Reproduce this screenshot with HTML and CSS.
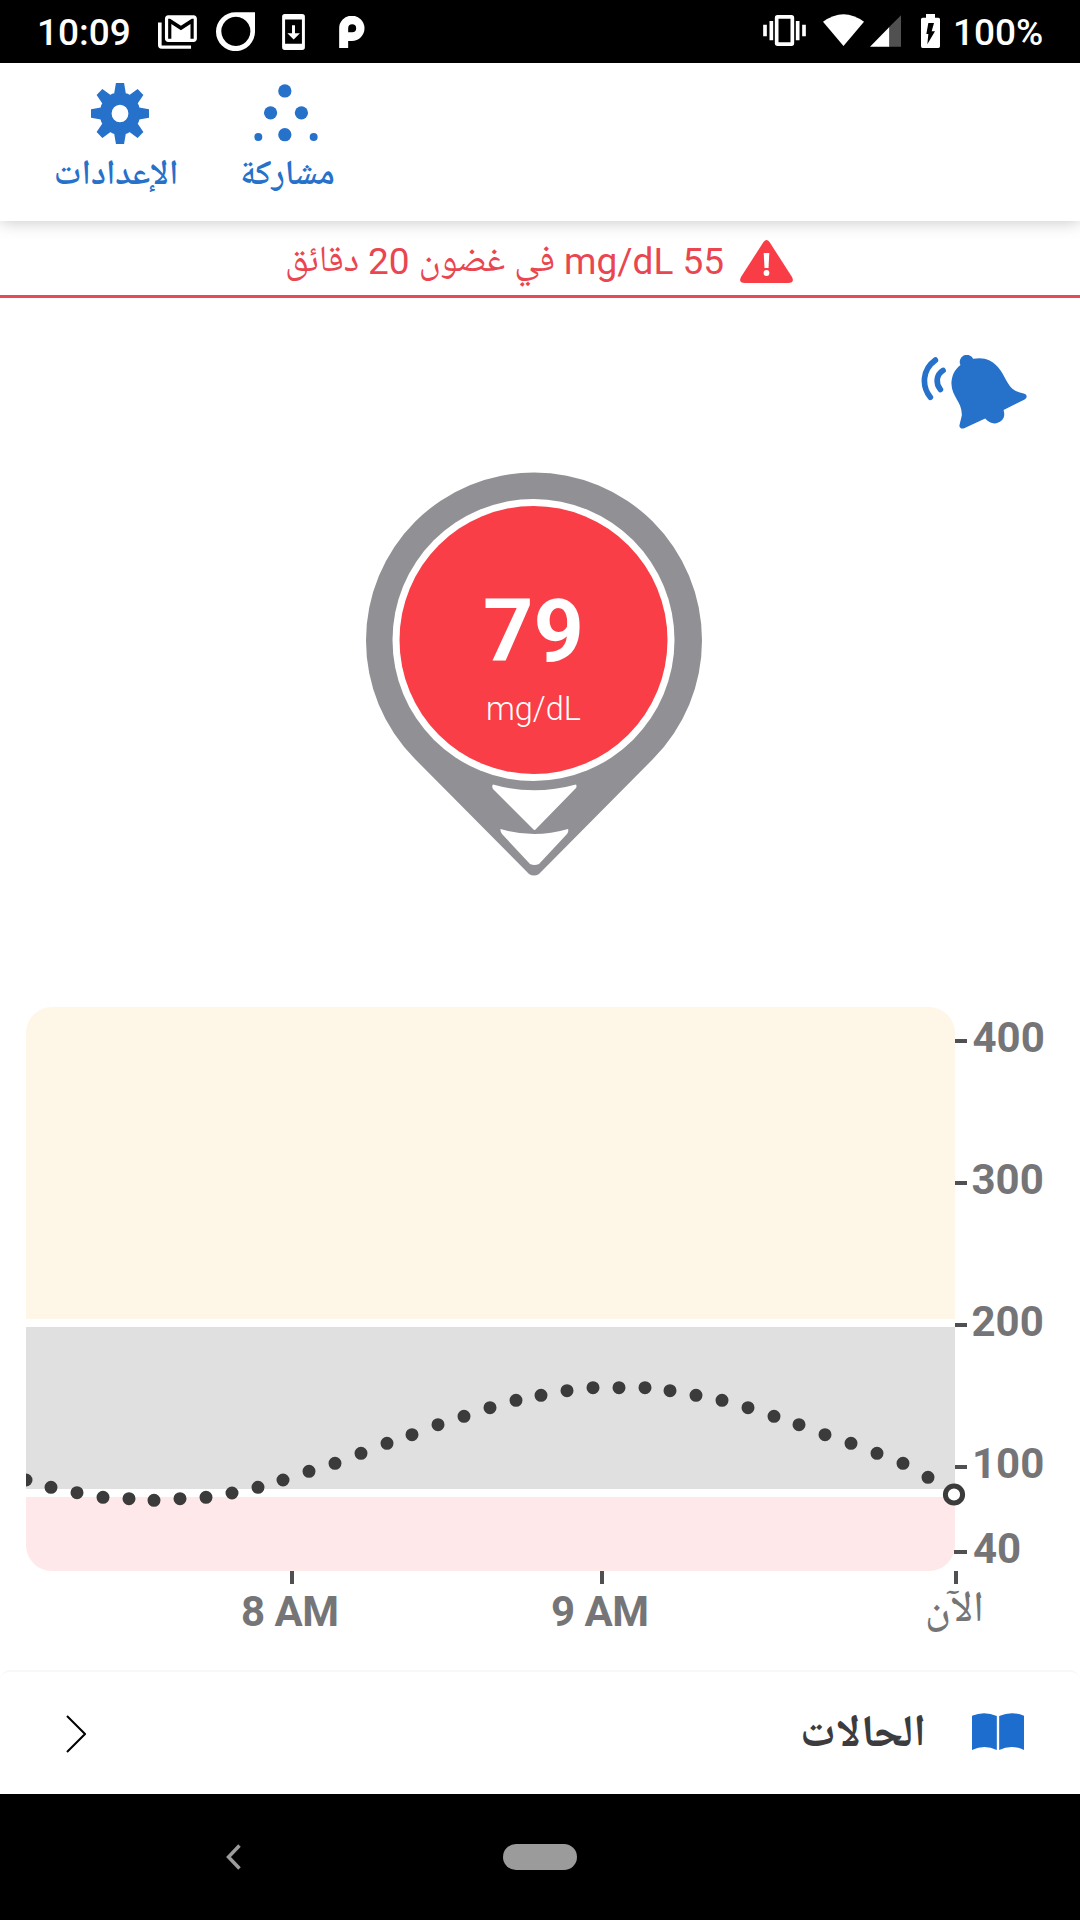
FILE: index.html
```html
<!DOCTYPE html>
<html lang="ar">
<head>
<meta charset="utf-8">
<title>79 mg/dL</title>
<link rel="stylesheet" href="styles.css">
</head>
<body>
<div class="screen">
  <div class="status">
    <span class="status-text clock">10:09</span>
    <svg class="i-mail" viewBox="474 44 118 101"><path fill="#fff" d="M474 66h11v69h89v10h-89q-11 0-11-11z"/><path fill="#fff" transform="translate(485.400 23.800) scale(4.830 5.060)" d="M20 4H4c-1.100 0-2 .9-2 2v12c0 1.100.9 2 2 2h16c1.100 0 2-.9 2-2V6c0-1.100-.9-2-2-2zm0 14h-2V9.250L12 13 6 9.250V18H4V6h1.200l6.800 4.250L18.800 6H20v12z"/></svg>
    <svg class="i-ring" viewBox="647 36 118 117"><path fill="#fff" fill-rule="evenodd" d="M706 36h59v58a59 59 0 1 1-59-58zM707 50a44 44 0 1 0 .1 0z"/></svg>
    <svg class="i-phone" viewBox="847 41 69 109"><path fill="#fff" fill-rule="evenodd" d="M855 41h53q8 0 8 8v93q0 8-8 8h-53q-8 0-8-8V49q0-8 8-8zM856 58v73h51V58z"/><path fill="#fff" d="M877 75h9v24h15l-19 19l-19-19h14z"/></svg>
    <svg class="i-p" viewBox="1017 48 77 96"><path fill="#fff" fill-rule="evenodd" d="M1017 144V86a38 38 0 1 1 38 37h-11v21zM1044 97h12a12 12 0 1 0-12-12z"/></svg>
    <span class="spacer"></span>
    <svg class="i-vibe" viewBox="128 46 128 93"><path fill="#fff" fill-rule="evenodd" d="M171 46h42q8 0 8 8v77q0 8-8 8h-42q-8 0-8-8V54q0-8 8-8zM174 57v71h36V57zM128 75h11v35h-11zM147 64h11v58h-11zM226 64h11v58h-11zM245 75h11v35h-11z"/></svg>
    <svg class="i-wifi" viewBox="310 42 122 95"><path fill="#fff" d="M310 65Q371 20 432 65L371 137z"/></svg>
    <svg class="i-signal" viewBox="449 46 94 95"><path fill="#505050" d="M543 46v95h-38V84z"/><path fill="#fff" d="M449 141L507 82v59z"/></svg>
    <svg class="i-battery" viewBox="603 42 57 102"><path fill="#fff" d="M618 42h27v11h10q5 0 5 5v81q0 5-5 5h-47q-5 0-5-5V58q0-5 5-5h10z"/><path d="M625 69h17l-7 25h10l-23 39l3-31h-6z"/></svg>
    <span class="status-text percent">100%</span>
  </div>

  <div class="header">
    <div class="tab settings">
      <svg class="i-gear" viewBox="-50 -50 100 100" preserveAspectRatio="none">
        <path fill="#2671ca" fill-rule="evenodd" d="M0-35A35 35 0 1 1 0 35A35 35 0 1 1 0-35zM0-14.500A14.500 14.500 0 1 0 0 14.500A14.500 14.500 0 1 0 0-14.500z"/>
        <g fill="#2671ca"><path d="M-7-50H7L10-33H-10z"/><path transform="rotate(45)" d="M-7-50H7L10-33H-10z"/><path transform="rotate(90)" d="M-7-50H7L10-33H-10z"/><path transform="rotate(135)" d="M-7-50H7L10-33H-10z"/><path transform="rotate(180)" d="M-7-50H7L10-33H-10z"/><path transform="rotate(225)" d="M-7-50H7L10-33H-10z"/><path transform="rotate(270)" d="M-7-50H7L10-33H-10z"/><path transform="rotate(315)" d="M-7-50H7L10-33H-10z"/></g>
      </svg>
      <span class="tab-label">الإعدادات</span>
    </div>
    <div class="tab share">
      <svg class="i-share" viewBox="762 252 191 175"><g fill="#2671ca"><circle cx="854" cy="273" r="20"/><circle cx="811" cy="339" r="20"/><circle cx="904" cy="339" r="20"/><circle cx="854" cy="405" r="20"/><circle cx="774" cy="412" r="12"/><circle cx="941" cy="412" r="12"/></g></svg>
      <span class="tab-label">مشاركة</span>
    </div>
  </div>

  <div class="alert">
    <svg class="i-warn" viewBox="0 0 53 43"><path fill="#f93d47" d="M23.500 2Q26.500-2 29.500 2L52 37Q55 43 48 43H5Q-2 43 1 37z"/><path fill="#fff" d="M23.700 13h5.600l-.8 15h-4z"/><circle cx="26.500" cy="33" r="2.900" fill="#fff"/></svg>
    <span class="latin">55</span>
    <span class="latin">mg/dL</span>
    <span class="ar">في</span>
    <span class="ar">غضون</span>
    <span class="latin">20</span>
    <span class="ar">دقائق</span>
  </div>

  <div class="hero">
    <svg class="i-bell" viewBox="125 74 317 221"><path fill="#2671ca" d="M243 104A20 20 0 0 1 281 85C300 82 315 83 330 90C359 104 372 135 386 160C396 178 410 184 434 190C443 193 443 202 435 207L372 238C376 252 374 262 366 270C352 283 330 281 317 264L254 293C246 296 239 291 240 284L247 255C249 215 217 200 216 160C216 137 226 117 243 104z"/><g fill="none" stroke="#2671ca" stroke-width="17" stroke-linecap="round"><path d="M168 89C129 117 126 166 153 200"/><path d="M191 120C169 134 169 160 183 177"/></g></svg>
    <div class="pin">
      <svg class="pin-shape" viewBox="0 0 336 404">
        <path fill="#919195" d="M49 287A168 168 0 1 1 287 287L173 402Q168 405 163 402z"/>
        <circle cx="167.500" cy="168" r="141" fill="#fff"/><circle cx="167.500" cy="168" r="134" fill="#f93e47"/>
        <path fill="#fff" d="M127 312.500Q168 324 210 312.500Q211 314 210 316L170 357Q168.500 359 167 357L127 317Q125.500 314 127 312.500z"/>
        <path fill="#fff" d="M134.500 357Q168 367 202 357Q203 359 201 362L173 392Q168.500 394 164 392L136 362Q134 359 134.500 357z"/>
      </svg>
      <div class="reading"><span class="value">79</span><span class="value-unit">mg/dL</span></div>
    </div>
  </div>

  <svg class="chart" viewBox="0 1000 1080 670">
    <path fill="#fef7e8" d="M26 1319V1033A26 26 0 0 1 52 1007H929A26 26 0 0 1 955 1033V1319z"/>
    <path fill="#e0e0e0" d="M26 1327H955V1489H26z"/>
    <path fill="#fee8ea" d="M26 1497H955V1545A26 26 0 0 1 929 1571H52A26 26 0 0 1 26 1545z"/>
    <path stroke="#505052" stroke-width="4" d="M955 1041h12M955 1183h12M955 1325h12M955 1467h12M954 1552h13M292 1571v13M602 1571v13M956 1571v13"/>
    <path fill="#3b3b3b" d="M26 1473.500a6.500 6.500 0 0 1 0 13z"/>
    <path fill="none" stroke="#3b3b3b" stroke-width="13" stroke-linecap="round" d="M51 1487.300h0M77 1492.700h0M103 1497.300h0M129 1498.700h0M154 1500.300h0M180 1498.700h0M206 1497.300h0M232 1493h0M258 1487.300h0M283 1480h0M309 1471.300h0M335 1463.300h0M361 1453.300h0M387 1443.300h0M412 1434.700h0M438 1424.700h0M464 1416.300h0M490 1407.700h0M516 1400.300h0M541 1395.300h0M567 1390.700h0M593 1387.700h0M619 1387.700h0M645 1387.700h0M670 1390.700h0M696 1395.300h0M722 1400.300h0M748 1407.700h0M774 1416.300h0M799 1424.700h0M825 1434.700h0M851 1443.300h0M877 1453.300h0M903 1463.300h0M928 1477.300h0"/>
    <circle cx="954" cy="1494.500" r="8.600" fill="#fff" stroke="#3b3b3b" stroke-width="5"/>
    <g class="axis">
      <text x="972.500" y="1052">400</text><text x="971.500" y="1194">300</text><text x="971.500" y="1336">200</text><text x="972" y="1478">100</text><text x="973" y="1563">40</text>
      <text x="241" y="1626" textLength="98">8 AM</text><text x="551" y="1626" textLength="98">9 AM</text>
      <text class="now" x="954.500" y="1621" text-anchor="middle">الآن</text>
    </g>
  </svg>

  <div class="events">
    <svg class="i-more" viewBox="0 0 20 38"><path fill="none" stroke="#000" stroke-width="2" d="M1 1L19 19L1 37"/></svg>
    <span class="spacer"></span>
    <span class="events-label">الحالات</span>
    <svg class="i-book" viewBox="637 188 155 110"><path fill="#1c6dce" d="M637 196Q674 180 711 197V298Q674 280 637 298zM718 197Q755 180 792 196V298Q755 280 718 298z"/></svg>
  </div>

  <div class="nav">
    <svg class="i-back" viewBox="0 0 15 26"><path fill="none" stroke="#9b9b9b" stroke-width="3.500" d="M13.500 1.500L2.500 13L13.500 24.500"/></svg>
    <span class="home"></span>
  </div>
</div>
</body>
</html>
```
FILE: styles.css
```css
* { box-sizing: border-box; }
body { margin: 0; background: #fff; font-family: Roboto, "Noto Naskh Arabic", "Noto Sans Arabic", "DejaVu Sans", sans-serif; }
svg { display: block; flex: none; }
span { white-space: nowrap; }
.screen { width: 1080px; height: 1920px; display: flex; flex-direction: column; overflow: hidden; }
.spacer { flex: 1; }

.status { height: 63px; flex: none; background: #000; display: flex; align-items: flex-start; padding: 0 37px 0 37px; }
.status-text { color: #fff; font-size: 37px; font-weight: 500; line-height: 43px; margin-top: 11px; }
.clock { width: 121px; }
.i-mail { width: 39px; height: 34px; margin-top: 15px; }
.i-ring { width: 39px; height: 39px; margin: 12px 0 0 19px; }
.i-phone { width: 23px; height: 36px; margin: 14px 0 0 27px; }
.i-p { width: 26px; height: 32px; margin: 16px 0 0 34px; }
.i-vibe { width: 43px; height: 31px; margin-top: 15px; }
.i-wifi { width: 41px; height: 32px; margin: 14px 0 0 17px; }
.i-signal { width: 31px; height: 32px; margin: 15px 0 0 6px; }
.i-battery { width: 19px; height: 34px; margin: 14px 0 0 20px; }
.percent { width: 90px; margin-left: 13px; }

.header { height: 158px; flex: none; display: flex; padding: 20px 0 0 46px; box-shadow: 0 1px 16px rgba(0, 0, 0, .22); }
.tab { display: flex; flex-direction: column; align-items: center; color: #2671ca; }
.settings { width: 148px; }
.share { width: 120px; margin-left: 32px; }
.i-gear { width: 58px; height: 61px; }
.i-share { width: 64px; height: 58px; margin: 1px 0 2px; }
.tab-label { font-size: 35px; font-weight: 600; line-height: 48px; margin-top: 5px; direction: rtl; }
.settings .tab-label { margin-right: 8px; }
.share .tab-label { margin-left: 3px; }

.alert { height: 77px; flex: none; display: flex; flex-direction: row-reverse; align-items: flex-start; padding: 19px 287px 0 0; border-bottom: 3px solid #e74a55; color: #e94650; }
.i-warn { width: 53px; height: 43px; margin-left: 16px; }
.latin, .ar { font-size: 37px; line-height: 44px; direction: rtl; }
.ar { margin-top: -3px; }
.alert span { margin-left: 9px; }

.hero { height: 702px; flex: none; display: flex; flex-direction: column; }
.i-bell { width: 106px; height: 74px; margin: 57px 0 0 921px; }
.pin { display: grid; width: 336px; height: 404px; margin: 43px 0 0 366px; }
.pin-shape { grid-area: 1 / 1; width: 336px; height: 404px; }
.reading { grid-area: 1 / 1; z-index: 1; display: flex; flex-direction: column; align-items: center; color: #fff; padding: 107px 1px 0 0; }
.value { font-size: 88px; font-weight: 700; line-height: 104px; }
.value-unit { font-size: 32.500px; font-weight: 300; line-height: 40px; margin-top: 6px; }

.chart { width: 1080px; height: 670px; }
.axis { font-size: 42px; font-weight: 700; fill: #757578; }
.now { font-size: 43px; font-weight: 500; }

.events { height: 124px; flex: none; display: flex; align-items: center; padding: 0 56px 0 66px; border-top: 2px solid #f8f8f8; border-radius: 10px; }
.i-more { width: 20px; height: 38px; margin-top: 2px; }
.events-label { color: #3c3c3e; font-size: 45px; line-height: 60px; font-weight: 700; direction: rtl; margin: 0 46px 5px 0; }
.i-book { width: 52px; height: 37px; margin-bottom: 4px; }

.nav { height: 126px; flex: none; background: #000; display: flex; align-items: center; padding-left: 226px; }
.i-back { width: 15px; height: 26px; }
.home { width: 74px; height: 26px; border-radius: 13px; background: #9b9b9b; margin-left: 262px; }
```
